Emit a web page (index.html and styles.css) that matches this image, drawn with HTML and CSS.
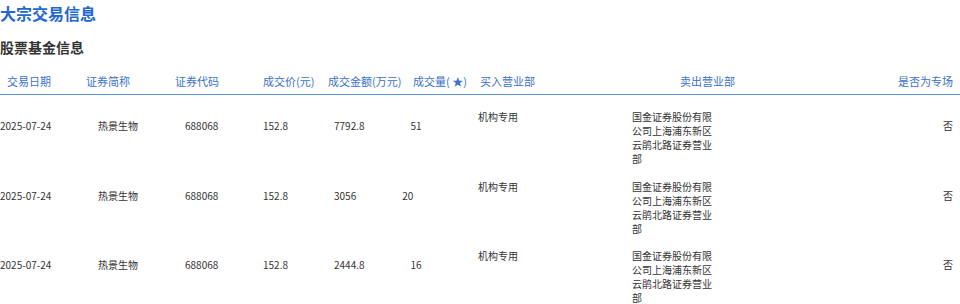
FILE: index.html
```html
<!DOCTYPE html>
<html lang="zh">
<head>
<meta charset="utf-8">
<link rel="stylesheet" href="styles.css">
</head>
<body>
<h1 class="title">大宗交易信息</h1>
<h2 class="subtitle">股票基金信息</h2>
<div class="table">
  <div class="thead">
    <span class="h h-date">交易日期</span>
    <span class="h h-name">证券简称</span>
    <span class="h h-code">证券代码</span>
    <span class="h h-price">成交价(元)</span>
    <span class="h h-amount">成交金额(万元)</span>
    <span class="h h-qty">成交量( ★)</span>
    <span class="h h-buy">买入营业部</span>
    <span class="h h-sell">卖出营业部</span>
    <span class="h h-flag">是否为专场</span>
  </div>
  <div class="row">
    <span class="c c-date">2025-07-24</span>
    <span class="c c-name">热景生物</span>
    <span class="c c-code">688068</span>
    <span class="c c-price">152.8</span>
    <span class="c c-group"><span class="c-amount">7792.8</span><span class="c-qty">51</span></span>
    <span class="c-buy">机构专用</span>
    <span class="c-sell">国金证券股份有限公司上海浦东新区云鹃北路证券营业部</span>
    <span class="c c-flag">否</span>
  </div>
  <div class="row">
    <span class="c c-date">2025-07-24</span>
    <span class="c c-name">热景生物</span>
    <span class="c c-code">688068</span>
    <span class="c c-price">152.8</span>
    <span class="c c-group"><span class="c-amount">3056</span><span class="c-qty">20</span></span>
    <span class="c-buy">机构专用</span>
    <span class="c-sell">国金证券股份有限公司上海浦东新区云鹃北路证券营业部</span>
    <span class="c c-flag">否</span>
  </div>
  <div class="row">
    <span class="c c-date">2025-07-24</span>
    <span class="c c-name">热景生物</span>
    <span class="c c-code">688068</span>
    <span class="c c-price">152.8</span>
    <span class="c c-group"><span class="c-amount">2444.8</span><span class="c-qty">16</span></span>
    <span class="c-buy">机构专用</span>
    <span class="c-sell">国金证券股份有限公司上海浦东新区云鹃北路证券营业部</span>
    <span class="c c-flag">否</span>
  </div>
</div>
</body>
</html>
```
FILE: styles.css
```css
html, body {
  margin: 0;
  padding: 0;
  background: #fff;
}
body {
  font-family: "Noto Sans CJK SC", "Noto Sans", sans-serif;
  color: #333;
  width: 960px;
  overflow: hidden;
}
.title {
  margin: 0;
  font-size: 16px;
  line-height: 26px;
  font-weight: bold;
  color: #2468cc;
}
.subtitle {
  margin: 11px 0 0;
  font-size: 14px;
  line-height: 20px;
  font-weight: bold;
  color: #333;
}
.thead {
  display: flex;
  padding: 16px 0 5px;
  border-bottom: 1px solid #5b8fd8;
  font-size: 11px;
  line-height: 16px;
  color: #3b72c6;
}
.h { flex: none; white-space: nowrap; }
.h-date { width: 79px; padding-left: 7px; }
.h-name { width: 89px; }
.h-code { width: 88px; }
.h-price { width: 65px; }
.h-amount { width: 85px; }
.h-qty { width: 67px; }
.h-buy { width: 200px; }
.h-sell { flex: 1; }
.h-flag { padding-right: 7px; }

.row {
  display: flex;
  align-items: flex-start;
  padding-top: 15px;
  height: 54.5px;
  font-size: 10px;
  color: #333;
}
.row:first-of-type { }
.c {
  flex: none;
  line-height: 32px;
  white-space: nowrap;
}
.c-date { width: 98px; }
.c-name { width: 87px; }
.c-code { width: 78px; }
.c-price { width: 71px; }
.c-group { width: 144px; display: flex; }
.c-amount { margin-right: 46px; }
.c-buy {
  flex: none;
  width: 154px;
  line-height: 14px;
}
.c-sell {
  flex: none;
  width: 84px;
  line-height: 14px;
}
.c-flag {
  margin-left: auto;
  padding-right: 7px;
}
```
